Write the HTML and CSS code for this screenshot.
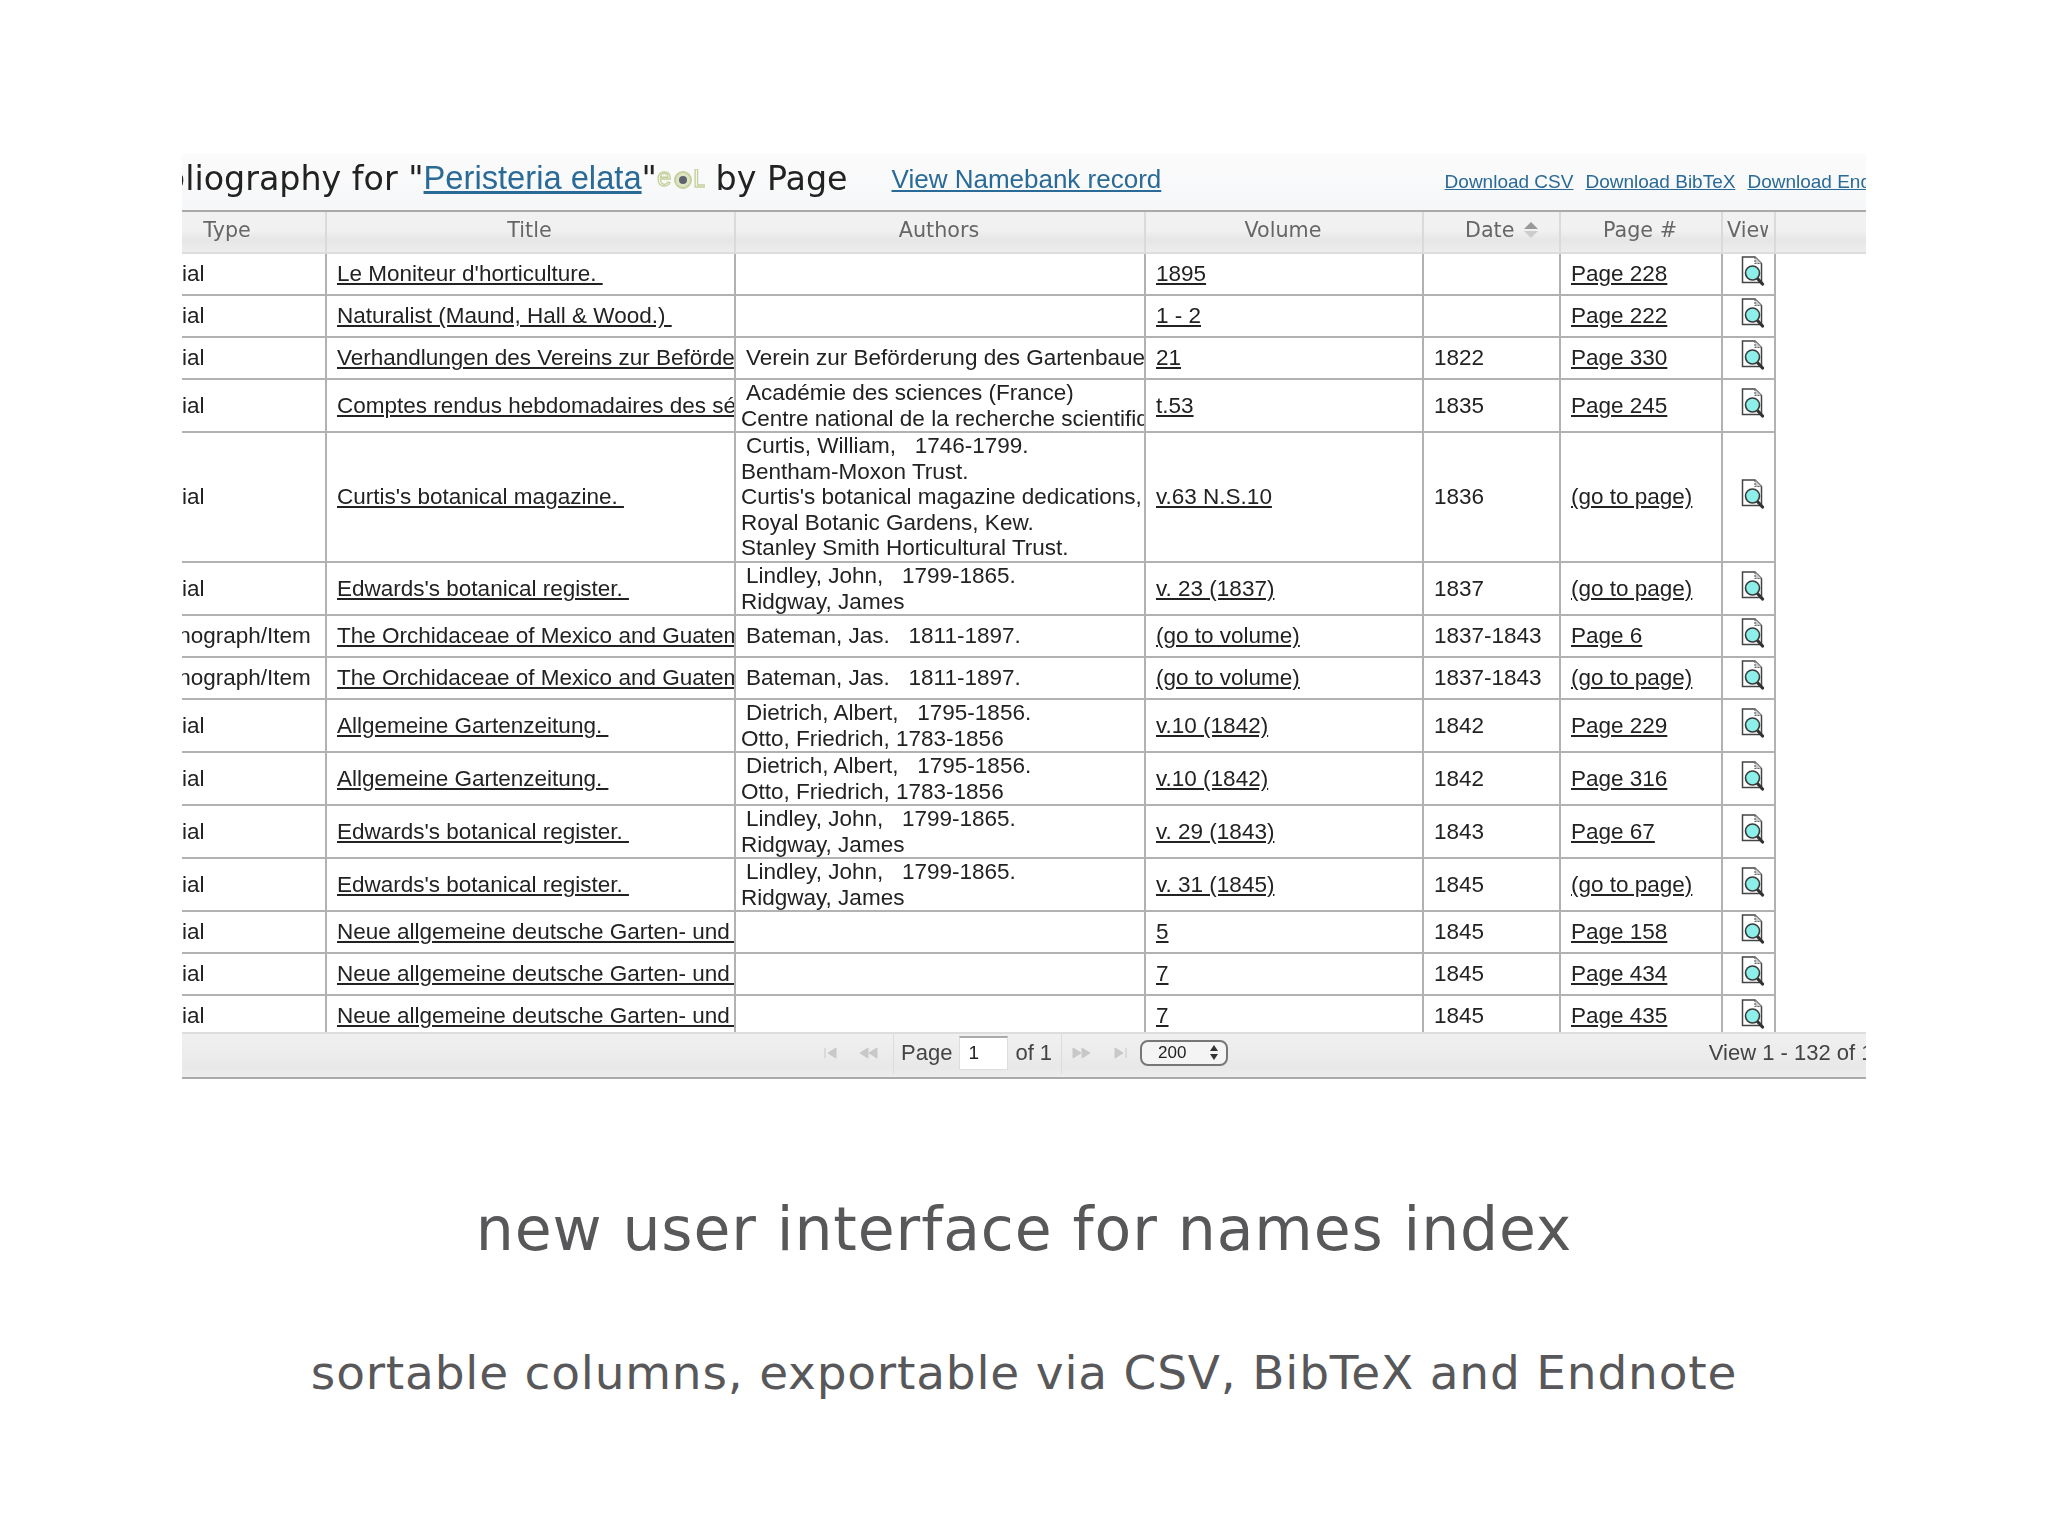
FILE: index.html
```html
<!DOCTYPE html>
<html lang="en">
<head>
  <meta charset="UTF-8" />
  <title>new user interface for names index</title>
  <link rel="stylesheet" href="styles.css">
</head>
<body>

  <svg class="defs" width="0" height="0">
    <symbol id="viewIcon" viewBox="0 0 24 30">
      <path d="M1.5 1 H14 L20.5 7.5 V26.5 H1.5 Z" fill="#fff" stroke="#444" stroke-width="1.5" />
      <path d="M14 1 V7.5 H20.5" fill="#ccc" stroke="#666" stroke-width="1.2" stroke-dasharray="2 1" />
      <path d="M16 22 L21.5 28" stroke="#333" stroke-width="3.2" stroke-linecap="round" />
      <circle cx="11.5" cy="17" r="7" fill="#8cefe9" stroke="#3a3a3a" stroke-width="1.6" />
    </symbol>
  </svg>

  <div class="panel">

    <!-- Title bar -->
    <div class="titlebar">
      <h2 class="title">Bibliography for "<a href="#" class="name-link">Peristeria elata</a>"<svg class="eol" viewBox="0 0 48 22" width="48" height="22"><text x="0" y="17" class="eol-text">e</text><circle cx="26" cy="11" r="8" fill="#dfe5c4" stroke="#c5d09a" stroke-width="2" /><circle cx="26" cy="11" r="4" fill="#5d6470" /><text x="36" y="18" class="eol-text">L</text></svg> by Page</h2>
      <a href="#" class="namebank">View Namebank record</a>
      <div class="downloads">
        <a href="#">Download CSV</a>
        <a href="#">Download BibTeX</a>
        <a href="#">Download Endnote</a>
      </div>
    </div>

    <!-- Results -->
    <table class="results">
      <colgroup>
        <col class="c-type"><col class="c-title"><col class="c-authors"><col class="c-volume"><col class="c-date"><col class="c-page"><col class="c-view"><col>
      </colgroup>
      <thead>
        <tr>
          <th>Type</th>
          <th>Title</th>
          <th>Authors</th>
          <th>Volume</th>
          <th class="date-head">Date <span class="sort"></span></th>
          <th>Page #</th>
          <th class="view-head"><div>View</div></th>
          <th class="filler"></th>
        </tr>
      </thead>
      <tbody>
        <tr class="one">
          <td class="type">Serial</td>
          <td><a href="#">Le Moniteur d'horticulture.&nbsp;</a></td>
          <td class="authors"></td>
          <td><a href="#">1895</a></td>
          <td></td>
          <td><a href="#">Page 228</a></td>
          <td class="view"><svg class="icon"><use href="#viewIcon" /></svg></td>
          <td class="filler"></td>
        </tr>
        <tr class="one">
          <td class="type">Serial</td>
          <td><a href="#">Naturalist (Maund, Hall &amp; Wood.)&nbsp;</a></td>
          <td class="authors"></td>
          <td><a href="#">1 - 2</a></td>
          <td></td>
          <td><a href="#">Page 222</a></td>
          <td class="view"><svg class="icon"><use href="#viewIcon" /></svg></td>
          <td class="filler"></td>
        </tr>
        <tr class="one">
          <td class="type">Serial</td>
          <td><a href="#">Verhandlungen des Vereins zur Beförderung des Gartenbaues</a></td>
          <td class="authors">Verein zur Beförderung des Gartenbaues in den</td>
          <td><a href="#">21</a></td>
          <td>1822</td>
          <td><a href="#">Page 330</a></td>
          <td class="view"><svg class="icon"><use href="#viewIcon" /></svg></td>
          <td class="filler"></td>
        </tr>
        <tr class="two">
          <td class="type">Serial</td>
          <td><a href="#">Comptes rendus hebdomadaires des séances</a></td>
          <td class="authors">Académie des sciences (France)<br>Centre national de la recherche scientifique</td>
          <td><a href="#">t.53</a></td>
          <td>1835</td>
          <td><a href="#">Page 245</a></td>
          <td class="view"><svg class="icon"><use href="#viewIcon" /></svg></td>
          <td class="filler"></td>
        </tr>
        <tr class="five">
          <td class="type">Serial</td>
          <td><a href="#">Curtis's botanical magazine.&nbsp;</a></td>
          <td class="authors">Curtis, William, &nbsp; 1746-1799.<br>Bentham-Moxon Trust.<br>Curtis's botanical magazine dedications,<br>Royal Botanic Gardens, Kew.<br>Stanley Smith Horticultural Trust.</td>
          <td><a href="#">v.63 N.S.10</a></td>
          <td>1836</td>
          <td><a href="#">(go to page)</a></td>
          <td class="view"><svg class="icon"><use href="#viewIcon" /></svg></td>
          <td class="filler"></td>
        </tr>
        <tr class="two">
          <td class="type">Serial</td>
          <td><a href="#">Edwards's botanical register.&nbsp;</a></td>
          <td class="authors">Lindley, John, &nbsp; 1799-1865.<br>Ridgway, James</td>
          <td><a href="#">v. 23 (1837)</a></td>
          <td>1837</td>
          <td><a href="#">(go to page)</a></td>
          <td class="view"><svg class="icon"><use href="#viewIcon" /></svg></td>
          <td class="filler"></td>
        </tr>
        <tr class="one">
          <td class="type">Monograph/Item</td>
          <td><a href="#">The Orchidaceae of Mexico and Guatemala</a></td>
          <td class="authors">Bateman, Jas. &nbsp; 1811-1897.</td>
          <td><a href="#">(go to volume)</a></td>
          <td>1837-1843</td>
          <td><a href="#">Page 6</a></td>
          <td class="view"><svg class="icon"><use href="#viewIcon" /></svg></td>
          <td class="filler"></td>
        </tr>
        <tr class="one">
          <td class="type">Monograph/Item</td>
          <td><a href="#">The Orchidaceae of Mexico and Guatemala</a></td>
          <td class="authors">Bateman, Jas. &nbsp; 1811-1897.</td>
          <td><a href="#">(go to volume)</a></td>
          <td>1837-1843</td>
          <td><a href="#">(go to page)</a></td>
          <td class="view"><svg class="icon"><use href="#viewIcon" /></svg></td>
          <td class="filler"></td>
        </tr>
        <tr class="two">
          <td class="type">Serial</td>
          <td><a href="#">Allgemeine Gartenzeitung.&nbsp;</a></td>
          <td class="authors">Dietrich, Albert, &nbsp; 1795-1856.<br>Otto, Friedrich, 1783-1856</td>
          <td><a href="#">v.10 (1842)</a></td>
          <td>1842</td>
          <td><a href="#">Page 229</a></td>
          <td class="view"><svg class="icon"><use href="#viewIcon" /></svg></td>
          <td class="filler"></td>
        </tr>
        <tr class="two">
          <td class="type">Serial</td>
          <td><a href="#">Allgemeine Gartenzeitung.&nbsp;</a></td>
          <td class="authors">Dietrich, Albert, &nbsp; 1795-1856.<br>Otto, Friedrich, 1783-1856</td>
          <td><a href="#">v.10 (1842)</a></td>
          <td>1842</td>
          <td><a href="#">Page 316</a></td>
          <td class="view"><svg class="icon"><use href="#viewIcon" /></svg></td>
          <td class="filler"></td>
        </tr>
        <tr class="two">
          <td class="type">Serial</td>
          <td><a href="#">Edwards's botanical register.&nbsp;</a></td>
          <td class="authors">Lindley, John, &nbsp; 1799-1865.<br>Ridgway, James</td>
          <td><a href="#">v. 29 (1843)</a></td>
          <td>1843</td>
          <td><a href="#">Page 67</a></td>
          <td class="view"><svg class="icon"><use href="#viewIcon" /></svg></td>
          <td class="filler"></td>
        </tr>
        <tr class="two">
          <td class="type">Serial</td>
          <td><a href="#">Edwards's botanical register.&nbsp;</a></td>
          <td class="authors">Lindley, John, &nbsp; 1799-1865.<br>Ridgway, James</td>
          <td><a href="#">v. 31 (1845)</a></td>
          <td>1845</td>
          <td><a href="#">(go to page)</a></td>
          <td class="view"><svg class="icon"><use href="#viewIcon" /></svg></td>
          <td class="filler"></td>
        </tr>
        <tr class="one">
          <td class="type">Serial</td>
          <td><a href="#">Neue allgemeine deutsche Garten- und Blumenzeitung</a></td>
          <td class="authors"></td>
          <td><a href="#">5</a></td>
          <td>1845</td>
          <td><a href="#">Page 158</a></td>
          <td class="view"><svg class="icon"><use href="#viewIcon" /></svg></td>
          <td class="filler"></td>
        </tr>
        <tr class="one">
          <td class="type">Serial</td>
          <td><a href="#">Neue allgemeine deutsche Garten- und Blumenzeitung</a></td>
          <td class="authors"></td>
          <td><a href="#">7</a></td>
          <td>1845</td>
          <td><a href="#">Page 434</a></td>
          <td class="view"><svg class="icon"><use href="#viewIcon" /></svg></td>
          <td class="filler"></td>
        </tr>
        <tr class="last">
          <td class="type">Serial</td>
          <td><a href="#">Neue allgemeine deutsche Garten- und Blumenzeitung</a></td>
          <td class="authors"></td>
          <td><a href="#">7</a></td>
          <td>1845</td>
          <td><a href="#">Page 435</a></td>
          <td class="view"><svg class="icon"><use href="#viewIcon" /></svg></td>
          <td class="filler"></td>
        </tr>
      </tbody>
    </table>

    <!-- Pager -->
    <div class="pager">
      <svg class="nav-first" viewBox="0 0 18 14" width="18" height="14"><path d="M2 2 V12 M13 2 L5 7 L13 12 Z" /></svg>
      <svg class="nav-prev" viewBox="0 0 21 14" width="21" height="14"><path d="M10 2 L2 7 L10 12 Z M19 2 L11 7 L19 12 Z" /></svg>
      <div class="pager-page">
        <span>Page</span>
        <input class="page-input" type="text" value="1" />
        <span>of 1</span>
      </div>
      <svg class="nav-next" viewBox="0 0 21 14" width="21" height="14"><path d="M2 2 L10 7 L2 12 Z M11 2 L19 7 L11 12 Z" /></svg>
      <svg class="nav-last" viewBox="0 0 18 14" width="18" height="14"><path d="M16 2 V12 M5 2 L13 7 L5 12 Z" /></svg>
      <div class="page-size">
        <span>200</span>
        <span class="arrows"><i class="up"></i><i class="down"></i></span>
      </div>
      <div class="pager-info">View 1 - 132 of 132</div>
    </div>
  </div>

  <h1 class="caption">new user interface for names index</h1>
  <p class="subcaption">sortable columns, exportable via CSV, BibTeX and Endnote</p>

</body>
</html>
```

FILE: styles.css
```css
* { box-sizing: border-box; }
body {
  margin: 0;
  background: #fff;
  font-family: "Liberation Sans", Arial, sans-serif;
  color: #222;
}
.defs { position: absolute; }

.panel {
  width: 1684px;
  margin: 154px auto 0;
  overflow: hidden;
  filter: blur(0.6px);
}

/* Title bar */
.titlebar {
  height: 56px;
  display: flex;
  align-items: center;
  background: linear-gradient(to bottom, #fbfbfc, #f6f7f8);
  white-space: nowrap;
}
.title {
  margin: 0 0 8px -50px;
  font-family: "DejaVu Sans", sans-serif;
  font-size: 33.3px;
  font-weight: normal;
  color: #222;
  display: flex;
  align-items: center;
  white-space: pre;
}
.name-link {
  font-family: "Liberation Sans", sans-serif;
  font-size: 32.7px;
  color: #2a6a96;
}
.eol { margin: 0 0 -3px 0; }
.eol-text {
  font-family: "Liberation Sans", sans-serif;
  font-size: 26px;
  fill: none;
  stroke: #c5d09a;
  stroke-width: 1.3;
}
.namebank {
  margin: 0 0 5px 44px;
  font-size: 26px;
  color: #2a6a96;
}
.downloads {
  margin-left: auto;
  margin-right: -42px;
  display: flex;
  gap: 12px;
  font-size: 19px;
}
.downloads a { color: #2a6a96; }

/* Table */
.results {
  width: 1735px;
  margin-left: -51px;
  table-layout: fixed;
  border-collapse: separate;
  border-spacing: 0;
  border-top: 2px solid #aaa;
  font-size: 22.5px;
}
.c-type { width: 196px; }
.c-title { width: 409px; }
.c-authors { width: 410px; }
.c-volume { width: 278px; }
.c-date { width: 137px; }
.c-page { width: 162px; }
.c-view { width: 53px; }

th {
  height: 42px;
  padding: 0 2px 5px 0;
  font-family: "DejaVu Sans", sans-serif;
  font-size: 20.7px;
  font-weight: normal;
  color: #666;
  background: linear-gradient(to bottom, #f1f1f1, #f1f1f1 45%, #e6e6e6 70%, #ededed);
  border-right: 2px solid #dadada;
  border-bottom: 2px solid #ddd;
  white-space: nowrap;
}
th.filler { border-right: none; }
th.date-head { padding-left: 22px; }
.view-head div {
  width: 41px;
  margin-left: 4px;
  overflow: hidden;
  text-align: left;
}
.sort {
  display: inline-block;
  position: relative;
  width: 14px;
  height: 16px;
  margin-left: 3px;
  vertical-align: -1px;
}
.sort::before, .sort::after {
  content: "";
  position: absolute;
  left: 0;
  border-left: 7px solid transparent;
  border-right: 7px solid transparent;
}
.sort::before { top: 0; border-bottom: 7px solid #999; }
.sort::after { bottom: 0; border-top: 7px solid #ccc; }

td {
  padding: 0 0 0 10px;
  border-right: 2px solid #b2b2b2;
  border-bottom: 2px solid #b2b2b2;
  overflow: hidden;
  white-space: nowrap;
  line-height: 25.5px;
}
td a { color: #222; }
td.filler { border: none; }
td.type { padding-left: 16px; }
td.authors {
  padding-left: 5px;
  text-indent: 5px;
}
td.view { padding: 0; }
.one td { height: 42px; }
.two td { height: 53px; }
.five td { height: 130px; }
.last td {
  height: 36px;
  padding-top: 7px;
  vertical-align: top;
  border-bottom: none;
}
.last td.view { padding-top: 3px; }
.last .icon { margin-bottom: 0; }
.last td.filler { padding-top: 0; }
.icon {
  display: block;
  width: 24px;
  height: 30px;
  margin: 0 0 6px 18px;
}

/* Pager */
.pager {
  height: 47px;
  display: flex;
  align-items: center;
  padding: 0 0 6px 641px;
  background: linear-gradient(to bottom, #f0f0f0, #ececec 50%, #e8e8e8 75%, #ededed);
  border-top: 2px solid #ddd;
  border-bottom: 2px solid #aaa;
  font-size: 22px;
  color: #444;
  white-space: nowrap;
}
.pager svg { fill: #c8c8c8; stroke: #c8c8c8; stroke-width: 1; flex-shrink: 0; }
.nav-first { margin-right: 17px; }
.nav-last { margin-left: 18px; }
.pager-page {
  height: 42px;
  margin: 0 9px 0 14px;
  padding: 0 9px 0 7px;
  display: flex;
  align-items: center;
  gap: 7px;
  border-left: 1px solid #dcdcdc;
  border-right: 1px solid #dcdcdc;
}
.page-input {
  width: 49px;
  height: 34px;
  padding: 0 0 0 8px;
  border: 1px solid #ddd;
  border-top: 2px solid #aaa;
  background: #fff;
  font: 19px "Liberation Sans", sans-serif;
  color: #222;
}
.page-size {
  width: 88px;
  height: 26px;
  margin-left: 12px;
  display: flex;
  align-items: center;
  justify-content: space-between;
  padding: 0 8px 0 16px;
  border: 2px solid #777;
  border-radius: 8px;
  background: #f4f4f4;
  font-size: 17px;
  color: #222;
}
.arrows {
  display: flex;
  flex-direction: column;
  gap: 3px;
}
.arrows i {
  border-left: 4px solid transparent;
  border-right: 4px solid transparent;
}
.arrows .up { border-bottom: 6px solid #333; }
.arrows .down { border-top: 6px solid #333; }
.pager-info {
  margin-left: auto;
  margin-right: -32px;
  font-size: 22px;
  color: #444;
}

/* Captions */
.caption {
  margin: 115px 0 0;
  text-align: center;
  font-family: "DejaVu Sans", sans-serif;
  font-size: 60px;
  font-weight: normal;
  letter-spacing: 0.9px;
  color: #58585a;
}
.subcaption {
  margin: 81px 0 0;
  text-align: center;
  font-family: "DejaVu Sans", sans-serif;
  font-size: 47px;
  letter-spacing: 0.8px;
  color: #58585a;
}
```
